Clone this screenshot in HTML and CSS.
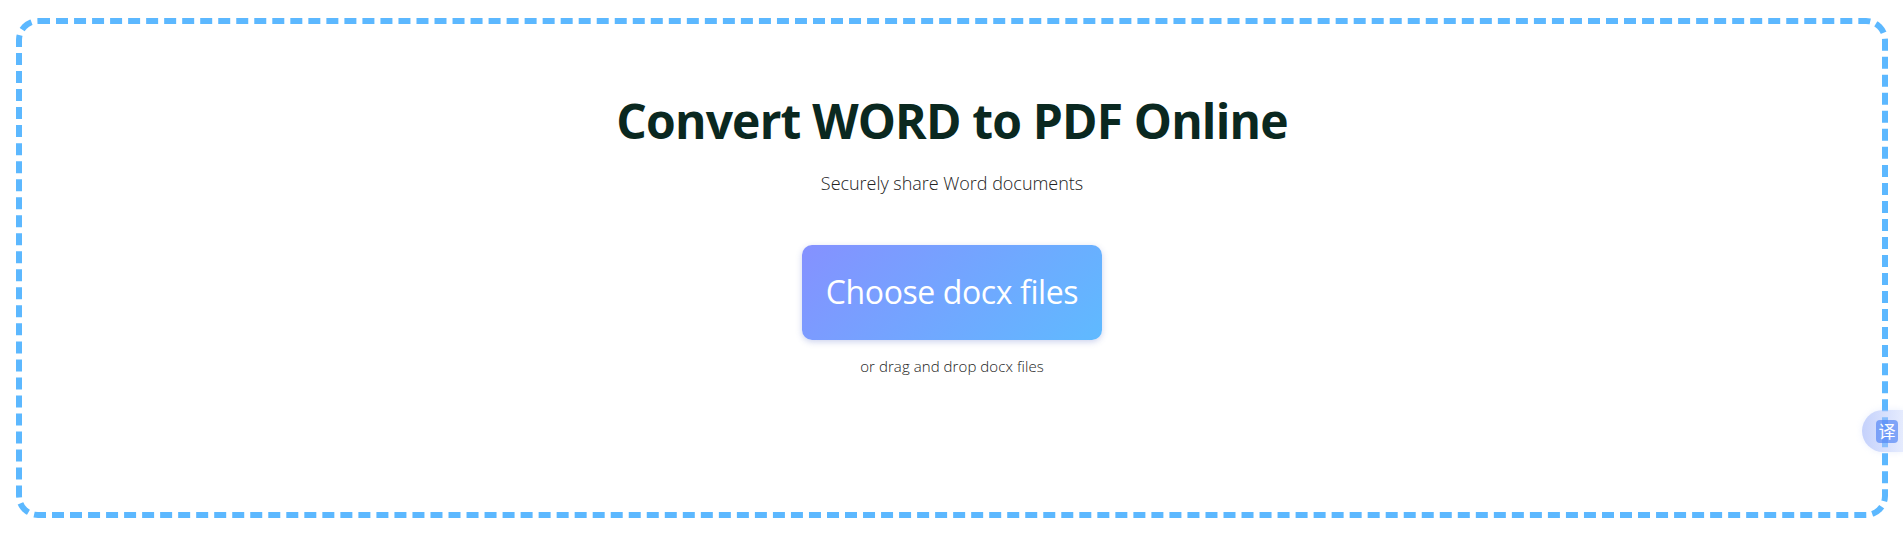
FILE: index.html
```html
<!DOCTYPE html>
<html lang="en">
<head>
  <meta charset="UTF-8" />
  <meta name="viewport" content="width=device-width, initial-scale=1.0" />
  <title>Convert WORD to PDF Online</title>
  <link rel="stylesheet" href="styles.css">
</head>
<body>
  <div id="dropzone">
    <h1 class="title">Convert WORD to PDF Online</h1>
    <p class="subtitle">Securely share Word documents</p>
    <button class="choose-btn">Choose docx files</button>
    <p class="hint">or drag and drop docx files</p>
  </div>
  <div class="translate-tab">
    <span class="translate-icon">译</span>
  </div>
</body>
</html>
```

FILE: styles.css
```css
body {
  margin: 0;
  height: 544px;
  overflow: hidden;
  background: #fff;
  font-family: "Open Sans", "Noto Sans CJK SC", sans-serif;
  padding: 18px 15px 26px 16px;
  box-sizing: border-box;
}
#dropzone {
  height: 500px;
  box-sizing: border-box;
  border: 6px dashed #5cb8ff;
  border-radius: 22px;
  display: flex;
  flex-direction: column;
  align-items: center;
  padding-top: 64px;
}
.title {
  margin: 0;
  font-size: 48px;
  line-height: 66px;
  font-weight: 700;
  letter-spacing: -0.85px;
  color: #0a2820;
}
.subtitle {
  margin: 16px 0 0;
  font-size: 18px;
  line-height: 26px;
  font-weight: 300;
  letter-spacing: -0.03px;
  color: #222;
}
.choose-btn {
  margin-top: 49px;
  width: 300px;
  height: 95px;
  border: 0;
  border-radius: 10px;
  padding: 0 0 2px;
  background: linear-gradient(135deg, #8591ff, #5fbaff);
  box-shadow: 0 2px 6px rgba(90, 110, 200, 0.3);
  color: #fff;
  font-family: inherit;
  font-size: 32px;
  letter-spacing: -0.4px;
  font-weight: 400;
}
.hint {
  margin: 15px 0 0;
  font-size: 15px;
  line-height: 22px;
  font-weight: 300;
  letter-spacing: 0.07px;
  color: #222;
}
.translate-tab {
  position: absolute;
  right: 0;
  top: 410px;
  width: 41px;
  height: 42px;
  border-radius: 21px 0 0 21px;
  background: linear-gradient(90deg, rgba(165, 185, 250, 0.65), rgba(190, 205, 252, 0.4));
  box-shadow: 0 0 6px rgba(150, 175, 245, 0.2);
  display: flex;
  align-items: center;
  padding-left: 14px;
  box-sizing: border-box;
}
.translate-icon {
  width: 22px;
  height: 23px;
  border-radius: 4px;
  background: rgba(85, 135, 245, 0.7);
  color: #fff;
  font-size: 17px;
  line-height: 23px;
  text-align: center;
}
```
